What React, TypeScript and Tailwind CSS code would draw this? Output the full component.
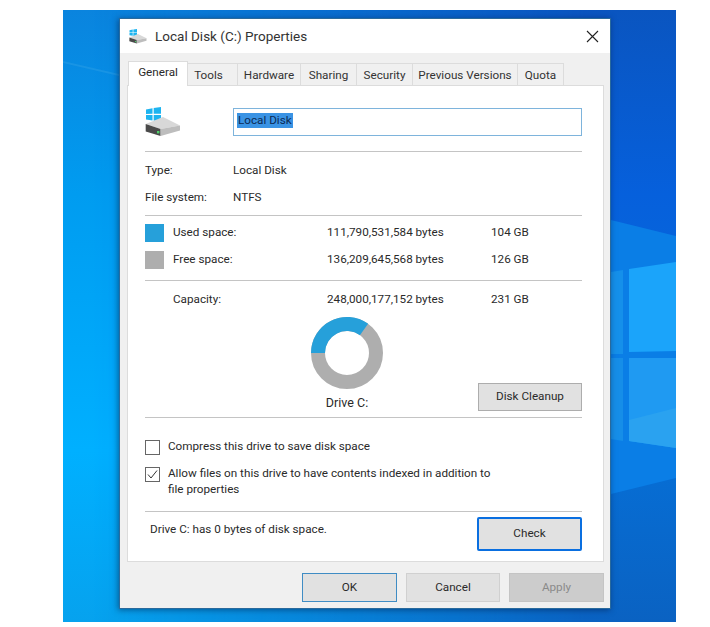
import React from "react";

function Wallpaper() {
  return (
    <svg className="absolute inset-0" width="613" height="612" viewBox="0 0 613 612">
      <defs>
        <linearGradient id="leftSide" x1="0" y1="0" x2="0" y2="1">
          <stop offset="0" stopColor="#0a84de" />
          <stop offset="0.3" stopColor="#009cf0" />
          <stop offset="0.72" stopColor="#00b0ff" />
          <stop offset="1" stopColor="#06a2ee" />
        </linearGradient>
        <linearGradient id="rightSide" x1="0" y1="0" x2="0" y2="1">
          <stop offset="0" stopColor="#0a55c0" />
          <stop offset="0.3" stopColor="#0660dc" />
          <stop offset="0.7" stopColor="#0670d8" />
          <stop offset="1" stopColor="#0a62c2" />
        </linearGradient>
        <linearGradient id="fade" x1="0" y1="0" x2="1" y2="0">
          <stop offset="0.05" stopColor="#000" />
          <stop offset="0.85" stopColor="#fff" />
        </linearGradient>
        <mask id="fadeMask">
          <rect width="613" height="612" fill="url(#fade)" />
        </mask>
      </defs>
      <rect width="613" height="612" fill="url(#leftSide)" />
      <rect width="613" height="612" fill="url(#rightSide)" mask="url(#fadeMask)" />
      {/* light beam behind the window logo */}
      <polygon points="548,210 613,226 613,468 548,484" fill="#0a7ee6" />
      <polygon points="548,262 560,260 560,344 548,344" fill="#1590ea" />
      <polygon points="548,348 560,348 560,431 548,429" fill="#168ee8" />
      <polygon points="566,259 613,252 613,341 566,342" fill="#1ba4fa" />
      <polygon points="566,348 613,348 613,438 566,431" fill="#1f9af2" />
      <polygon points="566,410 613,398 613,438 566,431" fill="#2aa2f0" />
      {/* streak on the left */}
      <polygon points="0,51 56,64 56,66 0,53" fill="#2a9ee6" opacity="0.5" />
    </svg>
  );
}

function DriveIcon({ className }: { className: string }) {
  return (
    <svg className={className} viewBox="0 0 36 30">
      <polygon points="1,2.5 7.5,1.2 7.5,6.8 1,7" fill="#1eb4f0" />
      <polygon points="8.7,1 16,0 16,6.8 8.7,6.8" fill="#1eb4f0" />
      <polygon points="1,8 7.5,8 7.5,13.6 1,12.6" fill="#1eb4f0" />
      <polygon points="8.7,8 16,8 16,14.6 8.7,13.8" fill="#1eb4f0" />
      <polygon points="18,10 35,18.6 15.6,22 0.7,17" fill="#d8d8d8" />
      <polygon points="0.7,17 15.6,22 15.6,29 0.7,24.6" fill="#4a4a4a" />
      <polygon points="15.6,22 35,18.6 35,23.6 15.6,29" fill="#bdbdbd" />
      <rect x="12" y="24" width="2.4" height="2.4" fill="#4fd06a" />
    </svg>
  );
}

function Divider() {
  return <div className="h-px bg-[#c4c4c4]" />;
}

const tabs = [
  { label: "Tools", width: "w-[50px] pr-[8px]" },
  { label: "Hardware", width: "w-[63px]" },
  { label: "Sharing", width: "w-[56px]" },
  { label: "Security", width: "w-[56px]" },
  { label: "Previous Versions", width: "w-[105px]" },
  { label: "Quota", width: "w-[46px]" },
];

function App() {
  return (
    <div className="w-[710px] h-[627px] bg-white pt-[10px] pl-[63px] font-['Roboto',sans-serif] text-[11.7px] text-[#2a2a2a] overflow-hidden">
      <div className="relative w-[613px] h-[612px] pt-2 pl-14">
        <Wallpaper />
        <div className="relative w-[492px] h-[591px] bg-[#f0f0f0] border border-[#2a6a9c] shadow-[-1px_1px_6px_rgba(0,20,60,0.5)] flex flex-col">
          {/* Title bar */}
          <div className="h-[34px] bg-white flex items-center pl-[9px] pr-[11px] shrink-0">
            <DriveIcon className="w-[18px] h-[15px]" />
            <span className="ml-2 text-[13.5px] text-[#333]">Local Disk (C:) Properties</span>
            <svg className="ml-auto w-[13px] h-[13px]" viewBox="0 0 13 13">
              <path d="M1 1 L12 12 M12 1 L1 12" stroke="#222" strokeWidth="1.1" fill="none" />
            </svg>
          </div>

          {/* Tabs */}
          <div className="flex pl-2 pt-2 h-[32px] shrink-0 items-end">
            <div className="w-[60px] h-[25px] bg-white border border-b-0 border-[#dcdcdc] flex items-center justify-center relative z-10 -mb-px pb-[3px]">
              General
            </div>
            {tabs.map((tab) => (
              <div
                key={tab.label}
                className={`${tab.width} h-[22px] pt-[2px] border-r border-t border-[#dcdcdc] flex items-center justify-center text-[#333]`}
              >
                {tab.label}
              </div>
            ))}
          </div>

          {/* General panel */}
          <div className="mx-[7px] w-[477px] h-[477px] bg-white border border-[#dcdcdc] pl-[17px] pr-[21px] pt-[22px]">
            <div className="flex items-start h-[28px]">
              <DriveIcon className="w-[36px] h-[30px] -mt-px" />
              <div className="ml-[52px] flex-1 h-[28px] border border-[#7eb4dc] flex items-center pl-[3px] pb-[4px]">
                <span className="bg-[#3a93e4] text-[#0b2a55] px-px leading-[15px]">Local Disk</span>
              </div>
            </div>
            <div className="mt-[15px]">
              <Divider />
            </div>

            <div className="mt-[5px] grid grid-cols-[88px_1fr] h-[54px] items-center">
              <span>Type:</span>
              <span>Local Disk</span>
              <span>File system:</span>
              <span>NTFS</span>
            </div>
            <div className="mt-[4px]">
              <Divider />
            </div>

            <div className="mt-[3px] grid grid-cols-[28px_154px_164px_1fr] auto-rows-[27px] items-center">
              <div className="w-[19px] h-[18px] bg-[#26a0da]" />
              <span>Used space:</span>
              <span>111,790,531,584 bytes</span>
              <span>104 GB</span>
              <div className="w-[19px] h-[18px] bg-[#aeaeae]" />
              <span>Free space:</span>
              <span>136,209,645,568 bytes</span>
              <span>126 GB</span>
            </div>
            <div className="mt-[7px]">
              <Divider />
            </div>

            <div className="mt-[5px] grid grid-cols-[28px_154px_164px_1fr] h-[27px] items-center">
              <div />
              <span>Capacity:</span>
              <span>248,000,177,152 bytes</span>
              <span>231 GB</span>
            </div>

            {/* Donut and cleanup */}
            <div className="mt-[3px] h-[95px] flex items-end">
              <div className="ml-[165px] w-[74px] flex flex-col items-center">
                <svg className="w-[74px] h-[74px]" viewBox="0 0 74 74">
                  <circle cx="37" cy="37" r="29" fill="none" stroke="#aeaeae" strokeWidth="14" />
                  <path d="M8 37 A29 29 0 0 1 54 13.5" fill="none" stroke="#26a0da" strokeWidth="14" />
                </svg>
                <span className="mt-[6px] mb-px leading-[14px] text-[12.5px]">Drive C:</span>
              </div>
              <button className="ml-auto w-[104px] h-[28px] bg-[#e1e1e1] border border-[#adadad]">Disk Cleanup</button>
            </div>
            <div className="mt-[6px]">
              <Divider />
            </div>

            {/* Options */}
            <div className="mt-[19px] h-[20px] flex items-center">
              <div className="w-[15px] h-[15px] bg-white border border-[#666]" />
              <span className="ml-[8px]">Compress this drive to save disk space</span>
            </div>
            <div className="mt-[8px] flex items-start">
              <div className="w-[15px] h-[15px] mt-[2px] bg-white border border-[#666] flex items-center justify-center">
                <svg className="w-[11px] h-[11px]" viewBox="0 0 11 11">
                  <path d="M1 5.5 L4 9 L10 1.5" stroke="#333" strokeWidth="1" fill="none" />
                </svg>
              </div>
              <p className="ml-[8px] w-[335px] leading-[16px]">
                Allow files on this drive to have contents indexed in addition to file properties
              </p>
            </div>
            <div className="mt-[14px]">
              <Divider />
            </div>

            <div className="mt-[5px] flex items-center h-[34px]">
              <span className="ml-[5px] -mt-[8px]">Drive C: has 0 bytes of disk space.</span>
              <button className="ml-auto w-[105px] h-[34px] bg-[#e1e1e1] border-2 border-[#0a6fe0] rounded-[2px]">Check</button>
            </div>
          </div>

          {/* Footer */}
          <div className="flex-1 flex items-start pt-[11px] pl-[182px] gap-[9px]">
            <button className="w-[95px] h-[29px] bg-[#e1e1e1] border border-[#3f8cc4]">OK</button>
            <button className="w-[94px] h-[29px] bg-[#e1e1e1] border border-[#d0d0d0]">Cancel</button>
            <button className="w-[95px] h-[29px] bg-[#cccccc] border border-[#c4c4c4] text-[#8a8a8a]">Apply</button>
          </div>
        </div>
      </div>
    </div>
  );
}

export default App;
